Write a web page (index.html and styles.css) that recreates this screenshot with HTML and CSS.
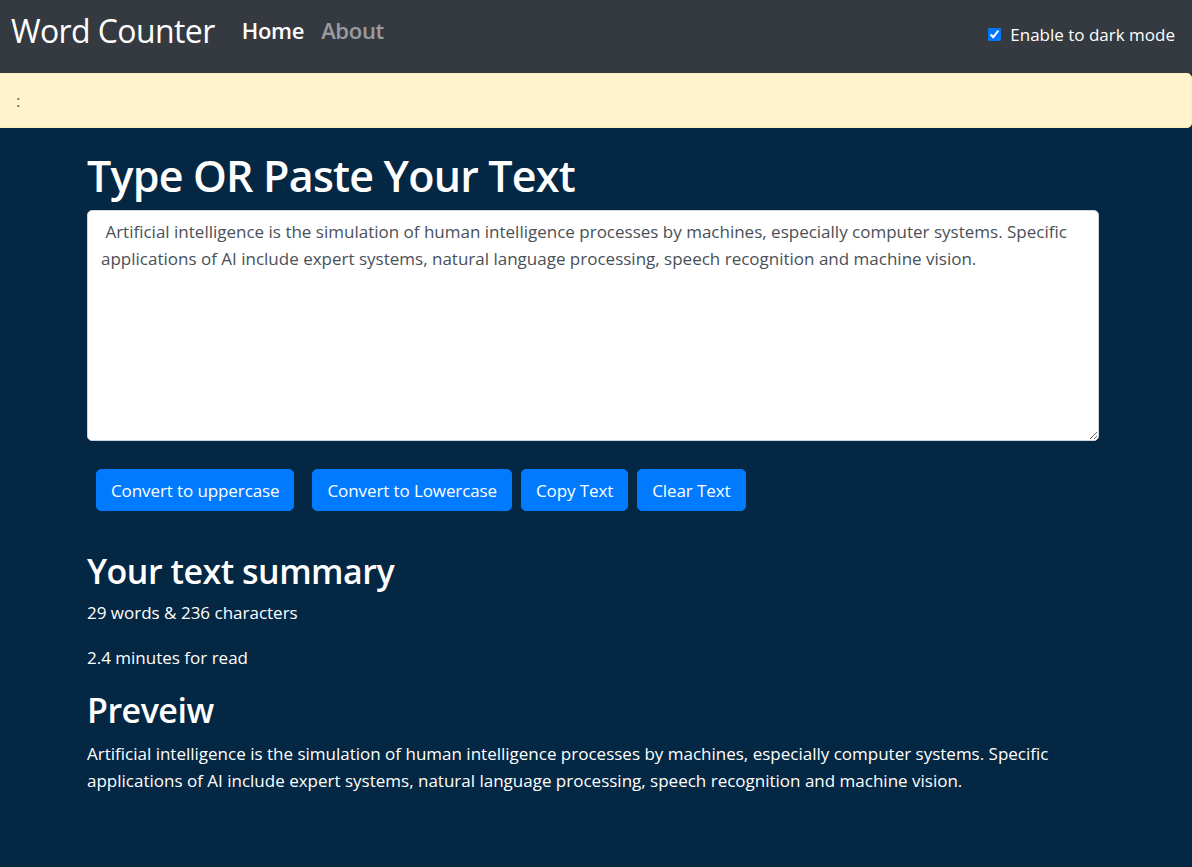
FILE: index.html
```html
<!DOCTYPE html>
<html lang="en">
<head>
    <meta charset="UTF-8">
    <meta name="viewport" content="width=device-width, initial-scale=1.0">
    <title>TextUtils - Home</title>
    <link rel="stylesheet" href="styles.css">
</head>
<body>
    <nav class="navbar">
        <a class="navbar-brand" href="#">Word Counter</a>
        <ul class="navbar-nav">
            <li><a class="nav-link active" href="#">Home</a></li>
            <li><a class="nav-link" href="#">About</a></li>
        </ul>
        <div class="form-check">
            <input type="checkbox" id="darkSwitch" checked>
            <label for="darkSwitch">Enable to dark mode</label>
        </div>
    </nav>

    <div class="alert"><strong></strong>: </div>

    <div class="container">
        <h1>Type OR Paste Your Text</h1>
        <textarea class="form-control" id="myBox"> Artificial intelligence is the simulation of human intelligence processes by machines, especially computer systems. Specific applications of AI include expert systems, natural language processing, speech recognition and machine vision.</textarea>

        <div class="btn-row">
            <button class="btn btn-first">Convert to uppercase</button>
            <button class="btn">Convert to Lowercase</button>
            <button class="btn">Copy Text</button>
            <button class="btn">Clear Text</button>
        </div>

        <h2 class="summary-title">Your text summary</h2>
        <p>29 words &amp; 236 characters</p>
        <p>2.4 minutes for read</p>

        <h2 class="preview-title">Preveiw</h2>
        <p>Artificial intelligence is the simulation of human intelligence processes by machines, especially computer systems. Specific applications of AI include expert systems, natural language processing, speech recognition and machine vision.</p>
    </div>
</body>
</html>
```

FILE: styles.css
```css
body { margin: 0; background: #042743; color: #fff; font-family: "Open Sans", "Noto Sans", sans-serif; font-size: 17px; line-height: 27px; }

.navbar { display: flex; align-items: flex-start; height: 73px; background: #343a40; padding: 0 17px 0 11px; box-sizing: border-box; }
.navbar-brand { font-size: 32px; letter-spacing: -0.6px; line-height: normal; margin-top: 9px; color: #fff; text-decoration: none; margin-right: 27px; }
.navbar-nav { display: flex; gap: 17px; list-style: none; margin: 15px 0 0; padding: 0; }
.nav-link { font-size: 22px; letter-spacing: -0.3px; line-height: normal; font-weight: 600; color: rgba(255, 255, 255, .5); text-decoration: none; }
.nav-link.active { color: #fff; }
.form-check { margin-left: auto; margin-top: 23px; display: flex; align-items: center; line-height: normal; }
.form-check input { width: 13px; height: 13px; margin: 0 9px 0 0; accent-color: #0075ff; }

.alert { height: 55px; box-sizing: border-box; background: #fff3cd; border: 1px solid #ffeeba; border-left: 0; border-radius: 0 5px 5px 0; color: #856404; padding: 13px 16px; }

.container { width: 1012px; margin-left: 87px; }
h1 { font-size: 43px; letter-spacing: -0.8px; line-height: 54px; font-weight: 600; margin: 21px 0 7px; }
h2 { font-size: 34px; letter-spacing: -0.5px; line-height: 43px; font-weight: 600; margin: 0 0 8px; }
.summary-title { margin-bottom: 6px; }
.preview-title { margin-top: 4px; }
p { margin: 0 0 18px; }

.form-control { display: block; width: 100%; height: 231px; box-sizing: border-box; margin: 0; padding: 7px 13px; border: 1px solid #ced4da; border-radius: 5px; background: #fff; color: #495057; font-family: inherit; font-size: 17px; line-height: 27px; resize: vertical; }

.btn-row { display: flex; gap: 9px; margin: 28px 0 39px; padding-left: 9px; }
.btn { background: #007bff; color: #fff; border: 1px solid #007bff; border-radius: 5px; padding: 6.5px 14px; font-family: inherit; font-size: 17px; letter-spacing: -0.1px; line-height: 27px; }
.btn-first { margin-right: 9px; }
```
